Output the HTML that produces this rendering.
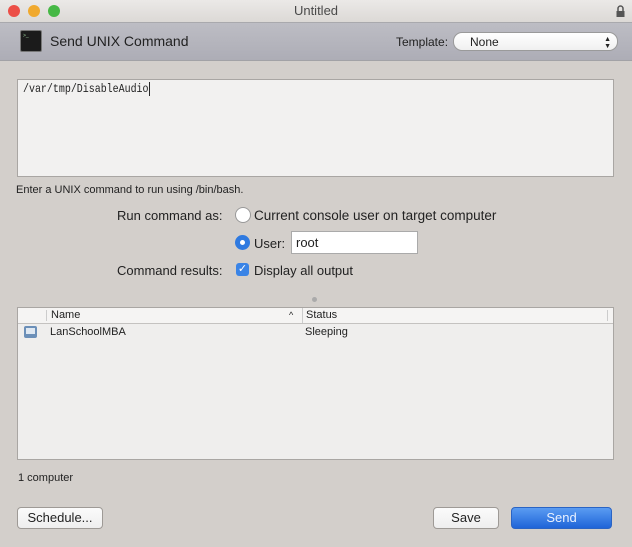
<!DOCTYPE html><html><head><style>
body{margin:0;width:632px;height:547px;background:#d3cfcb;font-family:"Liberation Sans",sans-serif;font-size:12px;color:#222;position:relative;overflow:hidden}
.a{position:absolute}
.tb{left:0;top:0;width:632px;height:22px;background:linear-gradient(#ebe9e7,#dcd9d6);text-align:center;line-height:22px;font-size:13px;color:#4a4a4a}
.dot{top:5px;width:12px;height:12px;border-radius:50%}
.hd{left:0;top:22px;width:632px;height:37px;background:linear-gradient(#bdbdc4,#adadb6);border-top:1px solid #a9a9ad;border-bottom:1px solid #a2a2a6}
.btn{background:linear-gradient(#fbfbfb,#eeeeee);border:1px solid #9e9a96;border-radius:4px;text-align:center;font-size:13px;line-height:20px}
</style></head><body>
<div class="a tb">Untitled</div>
<div class="a dot" style="left:8px;background:#ec4f47"></div>
<div class="a dot" style="left:28px;background:#f0a92e"></div>
<div class="a dot" style="left:48px;background:#46b845"></div>
<svg class="a" style="left:615px;top:5px" width="11" height="12"><path d="M3 6V3.5a2.5 2.5 0 0 1 5 0V6" stroke="#555" stroke-width="1.5" fill="none"/><rect x="1.5" y="6" width="8" height="6" fill="#555"/></svg>
<div class="a hd"></div>
<div class="a" style="left:20px;top:30px;width:20px;height:20px;background:#1b1b1b;border:1px solid #777;border-radius:2px"><span style="color:#9c9;font-size:5px;position:absolute;left:2px;top:2px">&gt;_</span></div>
<div class="a" style="left:50px;top:33px;font-size:14px;color:#222">Send UNIX Command</div>
<div class="a" style="left:396px;top:35px;font-size:12px">Template:</div>
<div class="a" style="left:453px;top:32px;width:163px;height:17px;background:linear-gradient(#fff,#f0f0f0);border:1px solid #9a9a9a;border-radius:9px;font-size:12px;line-height:18px"><span style="margin-left:16px">None</span><span style="position:absolute;right:6px;font-size:7px;line-height:7px;top:3px">▲<br>▼</span></div>
<div class="a" style="left:17px;top:79px;width:595px;height:96px;background:#f2f1f0;border:1px solid #a9a6a3"><div style="font-family:'Liberation Mono',monospace;font-size:12px;margin:2px 0 0 5px;white-space:nowrap;transform:scaleX(0.83);transform-origin:left">/var/tmp/DisableAudio<span style="border-left:1px solid #000;margin-left:1px"></span></div></div>
<div class="a" style="left:16px;top:184px;font-size:11px">Enter a UNIX command to run using /bin/bash.</div>
<div class="a" style="left:117px;top:208px;font-size:13px">Run command as:</div>
<div class="a" style="left:235px;top:207px;width:14px;height:14px;border-radius:50%;background:#fff;border:1px solid #999"></div>
<div class="a" style="left:254px;top:208px;font-size:13.5px">Current console user on target computer</div>
<div class="a" style="left:235px;top:235px;width:15px;height:15px;border-radius:50%;background:#2f7ae0"><div style="margin:5px;width:5px;height:5px;border-radius:50%;background:#fff"></div></div>
<div class="a" style="left:254px;top:236px;font-size:13px">User:</div>
<div class="a" style="left:291px;top:231px;width:125px;height:21px;background:#fff;border:1px solid #aaa;font-size:13px;line-height:21px;text-indent:4px">root</div>
<div class="a" style="left:117px;top:263px;font-size:13px">Command results:</div>
<div class="a" style="left:236px;top:263px;width:13px;height:13px;border-radius:3px;background:#3a84e6;color:#fff;font-size:11px;line-height:13px;text-align:center">✓</div>
<div class="a" style="left:254px;top:263px;font-size:13px">Display all output</div>
<div class="a" style="left:312px;top:297px;width:5px;height:5px;border-radius:50%;background:#aaa"></div>
<div class="a" style="left:17px;top:307px;width:595px;height:151px;background:#efeeed;border:1px solid #a9a6a3">
<div style="height:15px;border-bottom:1px solid #c4c2c0;background:#f5f4f3;position:relative;font-size:11px;line-height:15px">
<span class="a" style="left:28px;top:2px;height:11px;border-left:1px solid #ccc"></span>
<span class="a" style="left:33px">Name</span><span class="a" style="left:271px;font-size:9px">^</span>
<span class="a" style="left:284px;top:0;height:15px;border-left:1px solid #ccc"></span>
<span class="a" style="left:288px">Status</span>
<span class="a" style="left:589px;top:2px;height:11px;border-left:1px solid #ccc"></span></div>
<div style="position:relative;height:17px;font-size:11px;line-height:17px">
<span class="a" style="left:6px;top:2px;width:13px;height:12px;background:#6b8fb8;border-radius:2px"><span style="position:absolute;left:2px;top:2px;width:9px;height:6px;background:#dfe8f2"></span></span>
<span class="a" style="left:32px">LanSchoolMBA</span><span class="a" style="left:287px">Sleeping</span></div></div>
<div class="a" style="left:18px;top:472px;font-size:11px">1 computer</div>
<div class="a btn" style="left:17px;top:507px;width:84px">Schedule...</div>
<div class="a btn" style="left:433px;top:507px;width:64px">Save</div>
<div class="a btn" style="left:511px;top:507px;width:99px;background:linear-gradient(#5a9cf2,#1f64d8);border-color:#2a64c4;color:#eaf2ff">Send</div>
</body></html>
